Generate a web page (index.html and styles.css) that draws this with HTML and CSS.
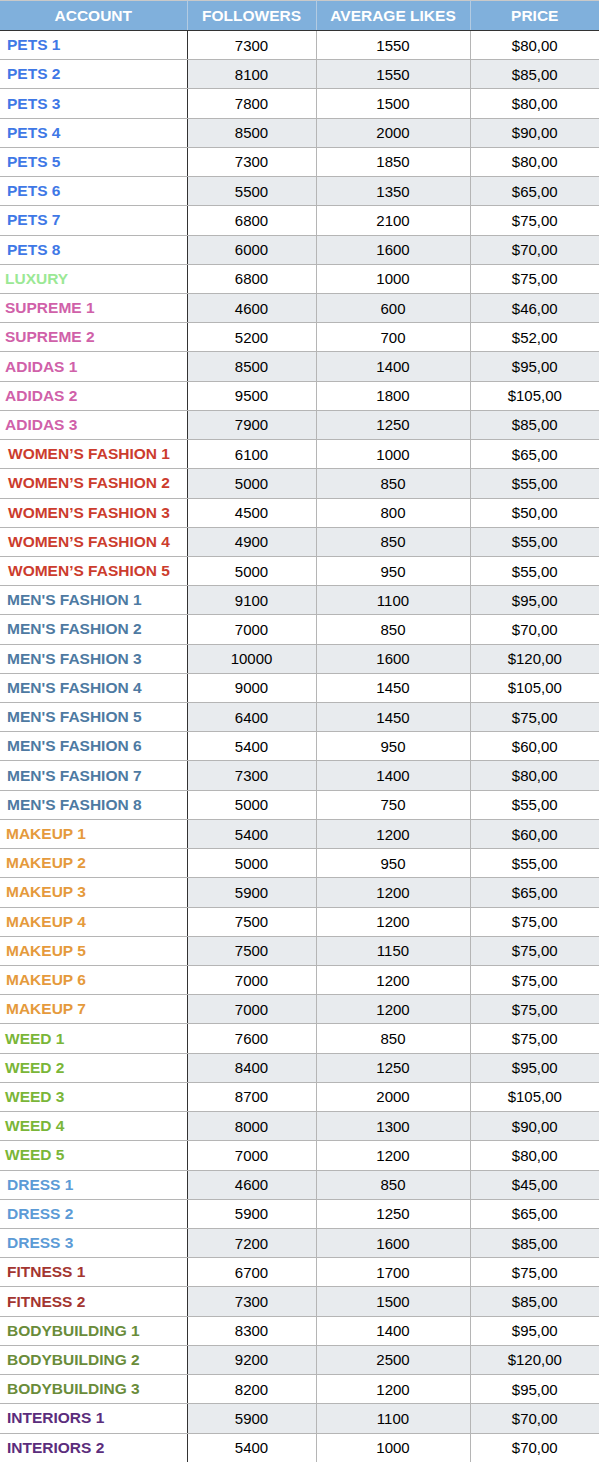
FILE: index.html
```html
<!DOCTYPE html>
<html lang="en">
<head>
    <meta charset="UTF-8">
    <meta name="viewport" content="width=device-width, initial-scale=1.0">
    <title>Accounts - Price list</title>
    <link rel="stylesheet" href="styles.css">
</head>
<body>
    <table class="price-table">
        <colgroup>
            <col class="col-account">
            <col class="col-followers">
            <col class="col-likes">
            <col class="col-price">
        </colgroup>
        <thead>
            <tr>
                <th>ACCOUNT</th>
                <th>FOLLOWERS</th>
                <th>AVERAGE LIKES</th>
                <th>PRICE</th>
            </tr>
        </thead>
        <tbody>
            <tr><td class="name pets">PETS 1</td><td>7300</td><td>1550</td><td>$80,00</td></tr>
            <tr><td class="name pets">PETS 2</td><td>8100</td><td>1550</td><td>$85,00</td></tr>
            <tr><td class="name pets">PETS 3</td><td>7800</td><td>1500</td><td>$80,00</td></tr>
            <tr><td class="name pets">PETS 4</td><td>8500</td><td>2000</td><td>$90,00</td></tr>
            <tr><td class="name pets">PETS 5</td><td>7300</td><td>1850</td><td>$80,00</td></tr>
            <tr><td class="name pets">PETS 6</td><td>5500</td><td>1350</td><td>$65,00</td></tr>
            <tr><td class="name pets">PETS 7</td><td>6800</td><td>2100</td><td>$75,00</td></tr>
            <tr><td class="name pets">PETS 8</td><td>6000</td><td>1600</td><td>$70,00</td></tr>
            <tr><td class="name luxury">LUXURY</td><td>6800</td><td>1000</td><td>$75,00</td></tr>
            <tr><td class="name supreme">SUPREME 1</td><td>4600</td><td>600</td><td>$46,00</td></tr>
            <tr><td class="name supreme">SUPREME 2</td><td>5200</td><td>700</td><td>$52,00</td></tr>
            <tr><td class="name supreme">ADIDAS 1</td><td>8500</td><td>1400</td><td>$95,00</td></tr>
            <tr><td class="name supreme">ADIDAS 2</td><td>9500</td><td>1800</td><td>$105,00</td></tr>
            <tr><td class="name supreme">ADIDAS 3</td><td>7900</td><td>1250</td><td>$85,00</td></tr>
            <tr><td class="name women">WOMEN’S FASHION 1</td><td>6100</td><td>1000</td><td>$65,00</td></tr>
            <tr><td class="name women">WOMEN’S FASHION 2</td><td>5000</td><td>850</td><td>$55,00</td></tr>
            <tr><td class="name women">WOMEN’S FASHION 3</td><td>4500</td><td>800</td><td>$50,00</td></tr>
            <tr><td class="name women">WOMEN’S FASHION 4</td><td>4900</td><td>850</td><td>$55,00</td></tr>
            <tr><td class="name women">WOMEN’S FASHION 5</td><td>5000</td><td>950</td><td>$55,00</td></tr>
            <tr><td class="name men">MEN'S FASHION 1</td><td>9100</td><td>1100</td><td>$95,00</td></tr>
            <tr><td class="name men">MEN'S FASHION 2</td><td>7000</td><td>850</td><td>$70,00</td></tr>
            <tr><td class="name men">MEN'S FASHION 3</td><td>10000</td><td>1600</td><td>$120,00</td></tr>
            <tr><td class="name men">MEN'S FASHION 4</td><td>9000</td><td>1450</td><td>$105,00</td></tr>
            <tr><td class="name men">MEN'S FASHION 5</td><td>6400</td><td>1450</td><td>$75,00</td></tr>
            <tr><td class="name men">MEN'S FASHION 6</td><td>5400</td><td>950</td><td>$60,00</td></tr>
            <tr><td class="name men">MEN'S FASHION 7</td><td>7300</td><td>1400</td><td>$80,00</td></tr>
            <tr><td class="name men">MEN'S FASHION 8</td><td>5000</td><td>750</td><td>$55,00</td></tr>
            <tr><td class="name makeup">MAKEUP 1</td><td>5400</td><td>1200</td><td>$60,00</td></tr>
            <tr><td class="name makeup">MAKEUP 2</td><td>5000</td><td>950</td><td>$55,00</td></tr>
            <tr><td class="name makeup">MAKEUP 3</td><td>5900</td><td>1200</td><td>$65,00</td></tr>
            <tr><td class="name makeup">MAKEUP 4</td><td>7500</td><td>1200</td><td>$75,00</td></tr>
            <tr><td class="name makeup">MAKEUP 5</td><td>7500</td><td>1150</td><td>$75,00</td></tr>
            <tr><td class="name makeup">MAKEUP 6</td><td>7000</td><td>1200</td><td>$75,00</td></tr>
            <tr><td class="name makeup">MAKEUP 7</td><td>7000</td><td>1200</td><td>$75,00</td></tr>
            <tr><td class="name weed">WEED 1</td><td>7600</td><td>850</td><td>$75,00</td></tr>
            <tr><td class="name weed">WEED 2</td><td>8400</td><td>1250</td><td>$95,00</td></tr>
            <tr><td class="name weed">WEED 3</td><td>8700</td><td>2000</td><td>$105,00</td></tr>
            <tr><td class="name weed">WEED 4</td><td>8000</td><td>1300</td><td>$90,00</td></tr>
            <tr><td class="name weed">WEED 5</td><td>7000</td><td>1200</td><td>$80,00</td></tr>
            <tr><td class="name dress">DRESS 1</td><td>4600</td><td>850</td><td>$45,00</td></tr>
            <tr><td class="name dress">DRESS 2</td><td>5900</td><td>1250</td><td>$65,00</td></tr>
            <tr><td class="name dress">DRESS 3</td><td>7200</td><td>1600</td><td>$85,00</td></tr>
            <tr><td class="name fitness">FITNESS 1</td><td>6700</td><td>1700</td><td>$75,00</td></tr>
            <tr><td class="name fitness">FITNESS 2</td><td>7300</td><td>1500</td><td>$85,00</td></tr>
            <tr><td class="name bodybuilding">BODYBUILDING 1</td><td>8300</td><td>1400</td><td>$95,00</td></tr>
            <tr><td class="name bodybuilding">BODYBUILDING 2</td><td>9200</td><td>2500</td><td>$120,00</td></tr>
            <tr><td class="name bodybuilding">BODYBUILDING 3</td><td>8200</td><td>1200</td><td>$95,00</td></tr>
            <tr><td class="name interiors">INTERIORS 1</td><td>5900</td><td>1100</td><td>$70,00</td></tr>
            <tr><td class="name interiors">INTERIORS 2</td><td>5400</td><td>1000</td><td>$70,00</td></tr>
        </tbody>
    </table>
</body>
</html>
```

FILE: styles.css
```css
* {
    box-sizing: border-box;
}

body {
    margin: 0;
    background-color: #fff;
    font-family: "Liberation Sans", Arial, Helvetica, sans-serif;
    color: #000;
}

.price-table {
    width: 599px;
    border-collapse: collapse;
    table-layout: fixed;
    font-size: 15px;
}

.col-account { width: 187px; }
.col-followers { width: 129px; }
.col-likes { width: 154px; }
.col-price { width: 129px; }

.price-table th {
    height: 30px;
    padding: 0;
    background-color: #80b0dc;
    color: #fff;
    font-size: 15.5px;
    font-weight: bold;
    text-align: center;
    border-top: 1px solid #c9c9c9;
    border-left: 1px solid #b3cbe2;
    border-right: 1px solid #b3cbe2;
    border-bottom: 1px solid #333;
}

.price-table th:first-child {
    border-left: none;
}

.price-table th:last-child {
    border-right: none;
}

.price-table tbody tr {
    height: 29.22px;
}

.price-table td {
    padding: 0;
    text-align: center;
    border: 1px solid #b5b5b5;
}

.price-table td:last-child {
    border-right: none;
}

.price-table tbody tr:nth-child(even) td {
    background-color: #e8ebee;
}

.price-table td.name {
    text-align: left;
    font-size: 15.5px;
    font-weight: bold;
    padding-left: 7px;
    white-space: nowrap;
    border-left: none;
    border-right: 1px solid #333;
    background-color: #fff !important;
}

/* groups */
.pets { color: #3f78e6; }
.luxury { color: #9be895; padding-left: 5px !important; }
.supreme { color: #d061a9; padding-left: 5px !important; }
.women { color: #cc3c2d; padding-left: 8px !important; }
.men { color: #4e7aa2; }
.makeup { color: #e59a3c; padding-left: 6px !important; }
.weed { color: #7ab638; padding-left: 5px !important; }
.dress { color: #5c9bd6; }
.fitness { color: #a33530; }
.bodybuilding { color: #6a8c3a; }
.interiors { color: #5b2d7c; }
```
